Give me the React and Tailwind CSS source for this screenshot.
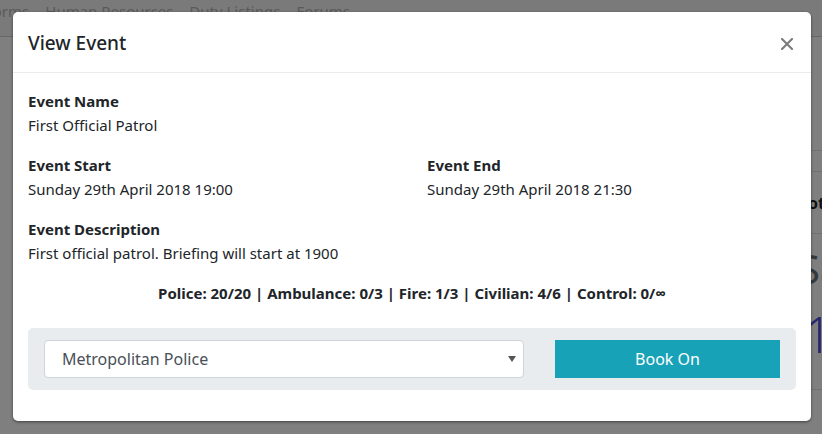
import React from "react";

const FONT = { fontFamily: "'Noto Sans', 'Open Sans', sans-serif" };

function Field({ label, value }) {
  return (
    <div>
      <div className="font-bold text-[#212529]">{label}</div>
      <div className="text-[#212529]">{value}</div>
    </div>
  );
}

function CloseIcon() {
  return (
    <svg width="12" height="12" viewBox="0 0 12 12" className="block">
      <path d="M1 1 L11 11 M11 1 L1 11" stroke="#7d7d7d" strokeWidth="2.2" strokeLinecap="square" />
    </svg>
  );
}

export default function App() {
  return (
    <div className="relative h-[434px] w-[822px] overflow-hidden bg-white" style={FONT}>
      {/* page behind the modal */}
      <nav className="h-[37px] bg-[#f4f4f4] border-b border-[#d0d0d0] flex items-start gap-[16px] -ml-[15px] text-[15px] leading-[16px] pt-[3px] text-[#b4b4b4]">
        <span>Forms</span>
        <span>Human Resources</span>
        <span>Duty Listings</span>
        <span>Forums</span>
      </nav>
      <div className="ml-[796px] text-[#212529]">
        <div className="h-[114px] border-b border-[#dee2e6]" />
        <div className="h-[21px] border-b border-[#dee2e6]" />
        <div className="h-[62px] border-b border-[#dee2e6] flex items-center pl-[4px] font-bold text-[16px]">Total</div>
        <div className="h-[70px] flex items-center pl-[2px] text-[40px] text-[#6c757d]">Sa</div>
        <div className="h-[86px] border-b border-[#dee2e6] flex items-start pl-[8px] text-[50px] leading-[60px] font-light text-[#5050e0]">1</div>
      </div>

      {/* backdrop */}
      <div className="absolute inset-0 bg-black/50" />

      {/* modal */}
      <div className="absolute left-[13px] top-[12px] w-[798px] bg-white rounded-[5px] shadow-[0_1px_3px_rgba(0,0,0,0.5)] text-[15px] leading-[24px]">
        <div className="h-[61px] px-[15px] flex items-center justify-between border-b border-[#e9ecef]">
          <h5 className="text-[19px] font-medium text-[#212529] pt-[2px]">View Event</h5>
          <div className="pr-[3px] pt-[4px]">
            <CloseIcon />
          </div>
        </div>

        <div className="px-[15px] pt-[16px] pb-[16px] flex flex-col gap-[16px]">
          <Field label="Event Name" value="First Official Patrol" />
          <div className="grid grid-cols-2 gap-[30px]">
            <Field label="Event Start" value="Sunday 29th April 2018 19:00" />
            <Field label="Event End" value="Sunday 29th April 2018 21:30" />
          </div>
          <Field label="Event Description" value="First official patrol. Briefing will start at 1900" />
          <div className="text-center font-bold text-[#212529]">
            Police: 20/20 | Ambulance: 0/3 | Fire: 1/3 | Civilian: 4/6 | Control: 0/∞
          </div>

          <div className="mt-[7px] mb-[15px] bg-[#e9ecef] rounded-[5px] px-[16px] py-[12px] grid grid-cols-[480px_1fr] gap-[31px]">
            <div className="h-[38px] bg-white border border-[#ced4da] rounded-[4px] flex items-center justify-between pl-[17px] pr-[7px] text-[#495057] text-[16px]">
              <span>Metropolitan Police</span>
              <svg width="8" height="6" viewBox="0 0 8 6">
                <path d="M0 0 L8 0 L4 6 Z" fill="#555" />
              </svg>
            </div>
            <button className="h-[38px] bg-[#17a2b8] text-white text-[16px] flex items-center justify-center">
              Book On
            </button>
          </div>
        </div>
      </div>
    </div>
  );
}
